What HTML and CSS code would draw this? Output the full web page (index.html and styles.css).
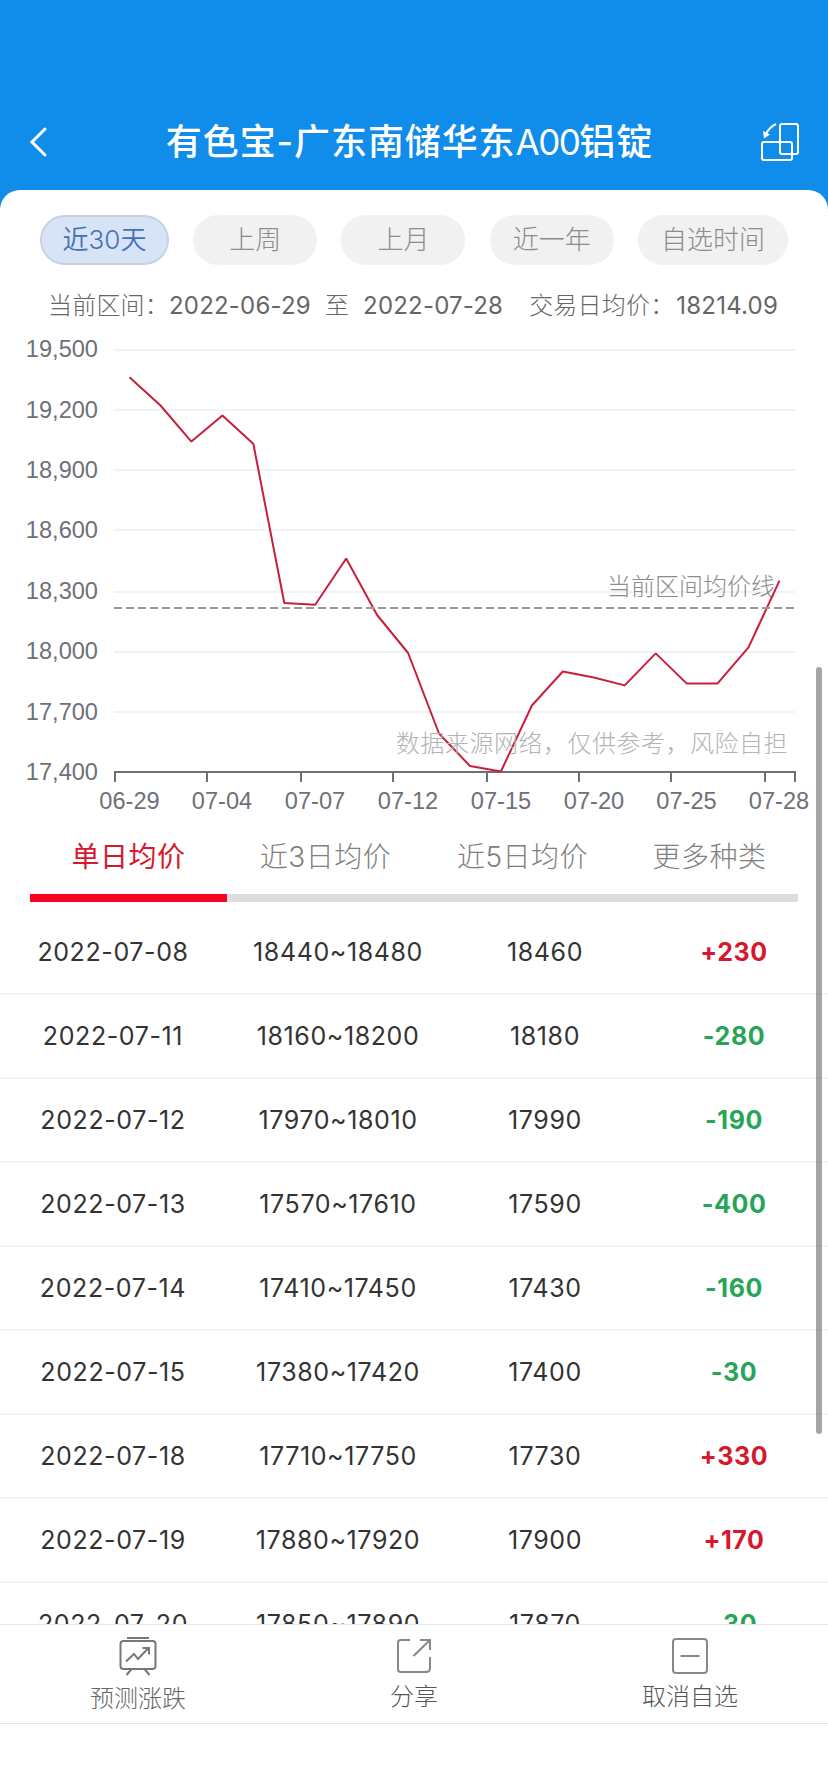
FILE: index.html
```html
<!DOCTYPE html>
<html lang="zh-CN">
<head>
    <meta charset="UTF-8">
    <meta name="viewport" content="width=device-width, initial-scale=1.0">
    <title>有色宝-广东南储华东A00铝锭</title>
    <link rel="stylesheet" href="styles.css">
</head>
<body>
    <header class="header">
        <svg class="back-icon" width="20" height="32" viewBox="0 0 20 32">
            <path d="M17 3 L4 16 L17 29"/>
        </svg>
        <h1>有色宝-广东南储华东<span class="grade">A00</span>铝锭</h1>
        <svg class="rotate-icon" width="42" height="42" viewBox="0 0 42 42">
            <rect x="21" y="3" width="18" height="30" rx="2"/>
            <rect x="3" y="21" width="30" height="18" rx="2"/>
            <path d="M17 3 Q10 6 6.5 14"/>
            <path class="rotate-head" d="M4 10 L11 13.5 L5 17.5 Z"/>
        </svg>
    </header>

    <main class="panel">
        <div class="ranges">
            <button class="range active">近30天</button>
            <button class="range">上周</button>
            <button class="range">上月</button>
            <button class="range">近一年</button>
            <button class="range">自选时间</button>
        </div>

        <div class="summary">
            <span class="summary-label">当前区间：</span>
            <span class="summary-date">2022-06-29</span>
            <span class="summary-to">至</span>
            <span class="summary-date">2022-07-28</span>
            <span class="summary-label summary-avg">交易日均价：</span>
            <span class="summary-price">18214.09</span>
        </div>

        <svg class="chart" width="828" height="490" viewBox="0 330 828 490">
            <g class="grid">
                <path d="M114 350H795M114 410H795M114 470H795M114 530H795M114 592H795M114 652H795M114 712H795"/>
            </g>
            <g class="y-labels">
                <text x="98" y="357">19,500</text>
                <text x="98" y="417.5">19,200</text>
                <text x="98" y="478">18,900</text>
                <text x="98" y="538">18,600</text>
                <text x="98" y="598.5">18,300</text>
                <text x="98" y="659">18,000</text>
                <text x="98" y="719.5">17,700</text>
                <text x="98" y="780">17,400</text>
            </g>
            <path class="axis" d="M114 772H796M115 772V782M207 772V782M301 772V782M393 772V782M487 772V782M579 772V782M671 772V782M765 772V782M795 772V782"/>
            <g class="x-labels">
                <text x="129.5" y="809">06-29</text>
                <text x="222" y="809">07-04</text>
                <text x="315" y="809">07-07</text>
                <text x="408" y="809">07-12</text>
                <text x="501" y="809">07-15</text>
                <text x="594" y="809">07-20</text>
                <text x="686.5" y="809">07-25</text>
                <text x="779" y="809">07-28</text>
            </g>
            <text class="avg-label" x="607" y="595">当前区间均价线</text>
            <polyline class="price-line" points="129.5,377.3 160.5,405.5 191.4,441.6 222.4,415.5 253.3,443.7 284.3,603 315.2,604.8 346.2,558.5 377.1,615 408.1,653 439,733.5 470,766 500.9,771.5 531.9,705.5 562.8,671.5 593.8,677.5 624.7,685.4 655.7,653.4 686.6,683.4 717.6,683.4 748.5,647.4 779.5,580.6"/>
            <path class="avg-line" d="M114 608H795"/>
            <text class="watermark" x="396" y="752">数据来源网络，仅供参考，风险自担</text>
        </svg>

        <nav class="tabs">
            <a class="tab active">单日均价</a>
            <a class="tab">近3日均价</a>
            <a class="tab">近5日均价</a>
            <a class="tab">更多种类</a>
        </nav>

        <div class="rows">
            <div class="row"><span>2022-07-08</span><span>18440~18480</span><span>18460</span><span class="up">+230</span></div>
            <div class="row"><span>2022-07-11</span><span>18160~18200</span><span>18180</span><span class="down">-280</span></div>
            <div class="row"><span>2022-07-12</span><span>17970~18010</span><span>17990</span><span class="down">-190</span></div>
            <div class="row"><span>2022-07-13</span><span>17570~17610</span><span>17590</span><span class="down">-400</span></div>
            <div class="row"><span>2022-07-14</span><span>17410~17450</span><span>17430</span><span class="down">-160</span></div>
            <div class="row"><span>2022-07-15</span><span>17380~17420</span><span>17400</span><span class="down">-30</span></div>
            <div class="row"><span>2022-07-18</span><span>17710~17750</span><span>17730</span><span class="up">+330</span></div>
            <div class="row"><span>2022-07-19</span><span>17880~17920</span><span>17900</span><span class="up">+170</span></div>
            <div class="row"><span>2022-07-20</span><span>17850~17890</span><span>17870</span><span class="down">-30</span></div>
        </div>
    </main>

    <div class="scrollbar"></div>

    <footer class="toolbar">
        <div class="tool tool-forecast">
            <svg width="40" height="40" viewBox="0 0 40 40">
                <rect x="2.5" y="5" width="35" height="28" rx="3"/>
                <path d="M9 2H31M13.5 33L8.5 39M26.5 33L31.5 39M8 25.5L16 18L20 23L30.5 12M24.5 12H31V18.5"/>
            </svg>
            <span>预测涨跌</span>
        </div>
        <div class="tool tool-share">
            <svg width="40" height="40" viewBox="0 0 40 40">
                <path d="M16 4H7Q4 4 4 7V33Q4 36 7 36H32Q36 36 36 32V21M19.5 20L36 4M26 4H36V14"/>
            </svg>
            <span>分享</span>
        </div>
        <div class="tool tool-remove">
            <svg width="40" height="40" viewBox="0 0 40 40">
                <rect x="3" y="3" width="34" height="34" rx="3"/>
                <path d="M10.5 20H29.5"/>
            </svg>
            <span>取消自选</span>
        </div>
    </footer>
</body>
</html>
```

FILE: styles.css
```css
:root {
    --blue: #108cea;
    --red: #d6182c;
    --green: #27a556;
    --text: #333;
    --muted: #808080;
}

* {
    box-sizing: border-box;
}

body {
    margin: 0;
    height: 1792px;
    display: flex;
    flex-direction: column;
    overflow: hidden;
    position: relative;
    background: var(--blue);
    color: var(--text);
    font-family: Inter, "Noto Sans CJK SC", sans-serif;
}

.header {
    flex: none;
    height: 190px;
    padding: 94px 27px 0 28px;
    display: flex;
    align-items: center;
}

.header h1 {
    flex: 1;
    margin: 0 0 0 12px;
    color: #fff;
    font-size: 36px;
    font-weight: 500;
    line-height: 48px;
    letter-spacing: 0.9px;
    text-align: center;
    white-space: nowrap;
}

.header .grade {
    font-size: 35px;
    font-weight: 400;
    letter-spacing: -1.5px;
}

.header svg {
    fill: none;
    stroke: #fff;
    stroke-width: 2;
}

.header .back-icon {
    stroke-width: 3;
    stroke-linecap: round;
}

.rotate-icon .rotate-head {
    fill: #fff;
    stroke: none;
}

.panel {
    flex: 1;
    min-height: 0;
    overflow: hidden;
    display: flex;
    flex-direction: column;
    background: #fff;
    border-radius: 20px 20px 0 0;
}

.ranges {
    flex: none;
    display: flex;
    justify-content: space-between;
    padding: 25px 40px 0;
}

.range {
    min-width: 124px;
    height: 50px;
    padding: 0 23px;
    border: none;
    border-radius: 25px;
    background: #f1f1f1;
    color: #8c8c8c;
    font-family: inherit;
    font-size: 26px;
    font-weight: 300;
    line-height: 50px;
    white-space: nowrap;
}

.range.active {
    width: 129px;
    padding: 0;
    border: 2px solid #c6d1e6;
    background: #d7e3f6;
    color: #4470b5;
    line-height: 46px;
    font-weight: 350;
}

.summary {
    flex: none;
    display: flex;
    height: 65px;
    padding: 23px 0 0 48px;
    font-size: 24px;
    line-height: 36px;
    letter-spacing: 0.2px;
    color: #666;
    white-space: nowrap;
}

.summary-label,
.summary-to {
    font-weight: 300;
}

.summary-to {
    margin: 0 14px;
}

.summary-avg {
    margin-left: 26px;
}

.summary-price {
    margin-left: 2px;
}

.chart {
    flex: none;
    display: block;
}

.grid path {
    stroke: #f0f2f3;
    stroke-width: 2;
}

.axis {
    fill: none;
    stroke: #6e7079;
    stroke-width: 2;
}

.x-labels text,
.y-labels text {
    font-family: "Liberation Sans", sans-serif;
    font-size: 23.6px;
    fill: #6e7079;
}

.y-labels text {
    text-anchor: end;
}

.x-labels text {
    text-anchor: middle;
}

.price-line {
    fill: none;
    stroke: #c8203c;
    stroke-width: 2;
    stroke-linejoin: bevel;
}

.avg-line {
    stroke: #999;
    stroke-width: 2;
    stroke-dasharray: 8 4;
}

.avg-label,
.watermark {
    font-size: 24px;
    font-weight: 300;
    fill: #8c8c8c;
}

.watermark {
    fill: #b3b3b3;
    letter-spacing: 0.5px;
}

.tabs {
    flex: none;
    display: grid;
    grid-template-columns: 197px 197px 197px 177px;
    height: 82px;
    margin: 0 30px;
    border-bottom: 8px solid #ddd;
}

.tab {
    height: 82px;
    border-bottom: 8px solid transparent;
    color: var(--muted);
    font-size: 28px;
    font-weight: 300;
    line-height: 74px;
    letter-spacing: 0.5px;
    text-align: center;
}

.tab.active {
    border-bottom-color: #f9001f;
    color: var(--red);
    font-weight: 400;
}

.rows {
    padding-top: 9px;
}

.row {
    display: grid;
    grid-template-columns: 226px 224px 190px 188px;
    height: 84px;
    border-bottom: 2px solid #f4f4f4;
    font-size: 25px;
    line-height: 83px;
    letter-spacing: 0.6px;
    text-align: center;
}

.up,
.down {
    font-weight: 700;
}

.up {
    color: var(--red);
}

.down {
    color: var(--green);
}

.scrollbar {
    position: absolute;
    top: 667px;
    left: 816px;
    width: 6px;
    height: 767px;
    border-radius: 3px;
    background: rgba(0, 0, 0, 0.35);
}

.toolbar {
    flex: none;
    display: grid;
    grid-template-columns: 1fr 1fr 1fr;
    height: 168px;
    padding-bottom: 68px;
    border-top: 1px solid #e6e6e6;
    background: linear-gradient(#e6e6e6, #e6e6e6) 0 98px / 100% 1px no-repeat #fff;
}

.tool {
    display: flex;
    flex-direction: column;
    align-items: center;
    padding-top: 11px;
    font-size: 24px;
    font-weight: 300;
    line-height: 36px;
    color: #555;
}

.tool svg {
    fill: none;
    stroke: #888;
    stroke-width: 2;
}

.tool span {
    margin-top: 3px;
}

.tool-forecast span {
    margin-top: 5px;
    color: #666;
}

.tool-forecast svg {
    stroke: #777;
}
```
